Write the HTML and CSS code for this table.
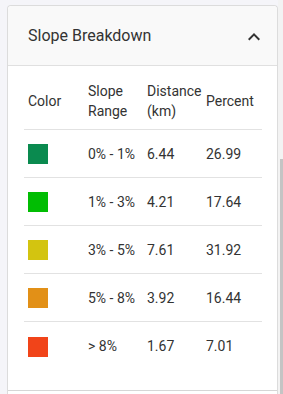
FILE: index.html
```html
<!DOCTYPE html>
<html>
<head>
<meta charset="utf-8">
<link rel="stylesheet" href="styles.css">
</head>
<body>
<div class="card">
  <div class="panel-header">
    <span class="title">Slope Breakdown</span>
    <svg class="chevron" width="24" height="24" viewBox="0 0 24 24"><path d="M7.41 15.41L12 10.83l4.59 4.58L18 14l-6-6-6 6z" fill="#333"/></svg>
  </div>
  <div class="panel-body">
    <div class="table">
      <div class="row head">
        <div class="cell">Color</div>
        <div class="cell">Slope<br>Range</div>
        <div class="cell">Distance<br>(km)</div>
        <div class="cell">Percent</div>
      </div>
      <div class="row">
        <div class="cell"><span class="swatch c1"></span></div>
        <div class="cell">0% - 1%</div>
        <div class="cell">6.44</div>
        <div class="cell">26.99</div>
      </div>
      <div class="row">
        <div class="cell"><span class="swatch c2"></span></div>
        <div class="cell">1% - 3%</div>
        <div class="cell">4.21</div>
        <div class="cell">17.64</div>
      </div>
      <div class="row">
        <div class="cell"><span class="swatch c3"></span></div>
        <div class="cell">3% - 5%</div>
        <div class="cell">7.61</div>
        <div class="cell">31.92</div>
      </div>
      <div class="row">
        <div class="cell"><span class="swatch c4"></span></div>
        <div class="cell">5% - 8%</div>
        <div class="cell">3.92</div>
        <div class="cell">16.44</div>
      </div>
      <div class="row last">
        <div class="cell"><span class="swatch c5"></span></div>
        <div class="cell">&gt; 8%</div>
        <div class="cell">1.67</div>
        <div class="cell">7.01</div>
      </div>
    </div>
  </div>
  <div class="next-section"></div>
</div>
<div class="scrollbar"><div class="thumb"></div></div>
</body>
</html>
```

FILE: styles.css
```css
html, body {
  margin: 0;
  padding: 0;
}
body {
  width: 283px;
  height: 394px;
  overflow: hidden;
  background: #f5f5f9;
  display: flex;
  align-items: flex-start;
  font-family: Roboto, "Liberation Sans", sans-serif;
  color: #333;
}
.card {
  margin: 5px 0 0 7px;
  width: 271px;
  box-sizing: border-box;
  border: 1px solid #dcdcdc;
  border-bottom: none;
  border-radius: 4px 4px 0 0;
  background: #fff;
  flex: none;
}
.panel-header {
  height: 59px;
  background: #f9f9f9;
  border-bottom: 1px solid #e0e0e0;
  border-radius: 4px 4px 0 0;
  display: flex;
  align-items: center;
  justify-content: space-between;
  padding: 0 11px 0 20px;
}
.title {
  font-size: 16px;
  color: #333;
  margin-top: -1px;
}
.chevron {
  display: block;
  margin-top: 3px;
}
.panel-body {
  padding: 7px 15px 20px 16px;
}
.row {
  display: grid;
  grid-template-columns: 60px 59px 59px 1fr;
  align-items: center;
  height: 47px;
  border-bottom: 1px solid #e2e2e2;
  font-size: 14px;
  line-height: 20px;
}
.row.head {
  box-sizing: border-box;
  height: 57px;
  padding: 8px 0;
}
.row.last {
  border-bottom: none;
  height: 48px;
}
.cell {
  padding-left: 4px;
  white-space: nowrap;
  color: #333;
}
.swatch {
  display: block;
  width: 20px;
  height: 20px;
  margin-top: 1px;
}
.c1 { background: #0a8a4f; }
.c2 { background: #01bd03; }
.c3 { background: #d3c410; }
.c4 { background: #e29017; }
.c5 { background: #f14419; }
.next-section {
  border-top: 1px solid #d6d6d6;
  height: 10px;
}
.scrollbar {
  width: 5px;
  height: 394px;
  flex: none;
  background: #f3f3f3;
  padding-left: 2px;
  box-sizing: border-box;
}
.thumb {
  margin-top: 159px;
  height: 235px;
  background: #c4c4c4;
}
```
